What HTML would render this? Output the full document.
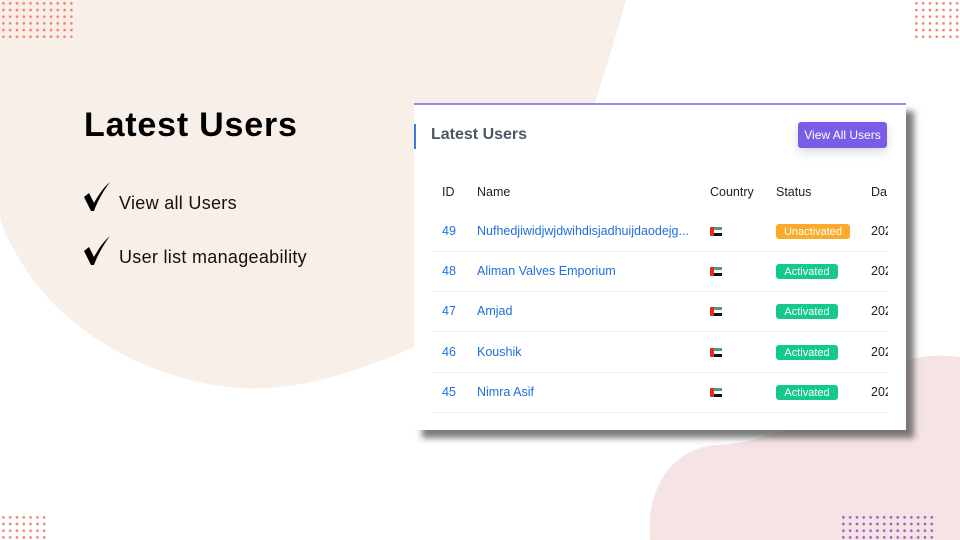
<!DOCTYPE html>
<html><head><meta charset="utf-8"><style>
*{margin:0;padding:0;box-sizing:border-box}
body{width:960px;height:540px;overflow:hidden;background:#fff;position:relative;font-family:"Liberation Sans",sans-serif}
.abs{position:absolute}
.dots{position:absolute;background-image:radial-gradient(circle,#f7806e 1.1px,transparent 1.6px);background-size:6.8px 6.7px}
.pdots{position:absolute;background-image:radial-gradient(circle,#9a5fcf 1.1px,transparent 1.6px);background-size:6.8px 6.7px}
.card{position:absolute;left:414px;top:103px;width:492px;height:327px;background:#fff;border-top:2px solid #8f8cf0;box-shadow:8px 8px 6px rgba(80,80,80,.75)}
.t{position:absolute;font-size:12.5px;color:#1e6fe0}
.row{position:absolute;left:18px;width:456px;height:1px;background:#eceff2}
.flag{position:absolute;width:12px;height:9px;left:296px}
.badge{position:absolute;left:362px;height:15px;border-radius:3px;color:#fff;font-size:11px;line-height:16px;text-align:center}
.dt{position:absolute;left:457px;font-size:12.5px;color:#222;width:17px;overflow:hidden;white-space:nowrap}
</style></head><body>
<svg class="abs" style="left:0;top:0" width="960" height="540">
<path d="M0 0 L626 0 C610 60 590 110 578 170 C560 250 500 320 420 345 C360 370 300 392 240 388 C150 382 60 330 20 260 C8 240 0 225 0 214 Z" fill="#f9efe9"/>
<path d="M650 540 C645 480 680 445 720 445 C780 440 800 420 830 400 C870 370 910 350 960 357 L960 540 Z" fill="#f6e3e4"/>
<path d="M84 197 L89 193 L94 203 C99 194 104 187 110 182 C104 190 98 200 94 211 L91 211 Z" fill="#000"/>
<path d="M84 251 L89 247 L94 257 C99 248 104 241 110 236 C104 244 98 254 94 265 L91 265 Z" fill="#000"/>
</svg>
<div class="dots" style="left:0;top:0;width:74px;height:38px"></div>
<div class="dots" style="left:913px;top:0;width:47px;height:38px"></div>
<div class="dots" style="left:0;top:514px;width:48px;height:26px"></div>
<div class="pdots" style="left:840px;top:514px;width:96px;height:26px"></div>

<div class="abs" style="left:84px;top:106px;font-size:34px;font-weight:bold;color:#000;letter-spacing:0.8px">Latest Users</div>
<div class="abs" style="left:119px;top:193px;font-size:18px;color:#111;letter-spacing:0.3px">View all Users</div>
<div class="abs" style="left:119px;top:247px;font-size:18px;color:#111;letter-spacing:0.3px">User list manageability</div>

<div class="card">
<div class="abs" style="left:0;top:19px;width:2px;height:25px;background:#3d7be0"></div>
<div class="abs" style="left:17px;top:21px;font-size:16px;font-weight:bold;color:#4a5866">Latest Users</div>
<div class="abs" style="left:384px;top:17px;width:89px;height:26px;background:#7b5ce8;border-radius:3px;color:#fff;font-size:12px;line-height:26px;text-align:center;box-shadow:0 4px 10px rgba(0,0,0,.15)">View All Users</div>
<div class="abs" style="left:28px;top:80px;font-size:12.5px;color:#222">ID</div>
<div class="abs" style="left:63px;top:80px;font-size:12.5px;color:#222">Name</div>
<div class="abs" style="left:296px;top:80px;font-size:12.5px;color:#222">Country</div>
<div class="abs" style="left:362px;top:80px;font-size:12.5px;color:#222">Status</div>
<div class="dt" style="top:80px">Da</div>

<div class="t" style="left:28px;top:119px">49</div><div class="t" style="left:63px;top:119px">Nufhedjiwidjwjdwihdisjadhuijdaodejg...</div>
<div class="t" style="left:28px;top:159px">48</div><div class="t" style="left:63px;top:159px">Aliman Valves Emporium</div>
<div class="t" style="left:28px;top:199px">47</div><div class="t" style="left:63px;top:199px">Amjad</div>
<div class="t" style="left:28px;top:240px">46</div><div class="t" style="left:63px;top:240px">Koushik</div>
<div class="t" style="left:28px;top:280px">45</div><div class="t" style="left:63px;top:280px">Nimra Asif</div>

<svg class="flag" style="top:122px" viewBox="0 0 12 9"><rect width="12" height="3" fill="#4aa36b"/><rect y="3" width="12" height="3" fill="#fff"/><rect y="6" width="12" height="3" fill="#111"/><rect width="4" height="9" fill="#e02b2b"/></svg>
<svg class="flag" style="top:162px" viewBox="0 0 12 9"><rect width="12" height="3" fill="#4aa36b"/><rect y="3" width="12" height="3" fill="#fff"/><rect y="6" width="12" height="3" fill="#111"/><rect width="4" height="9" fill="#e02b2b"/></svg>
<svg class="flag" style="top:202px" viewBox="0 0 12 9"><rect width="12" height="3" fill="#4aa36b"/><rect y="3" width="12" height="3" fill="#fff"/><rect y="6" width="12" height="3" fill="#111"/><rect width="4" height="9" fill="#e02b2b"/></svg>
<svg class="flag" style="top:243px" viewBox="0 0 12 9"><rect width="12" height="3" fill="#4aa36b"/><rect y="3" width="12" height="3" fill="#fff"/><rect y="6" width="12" height="3" fill="#111"/><rect width="4" height="9" fill="#e02b2b"/></svg>
<svg class="flag" style="top:283px" viewBox="0 0 12 9"><rect width="12" height="3" fill="#4aa36b"/><rect y="3" width="12" height="3" fill="#fff"/><rect y="6" width="12" height="3" fill="#111"/><rect width="4" height="9" fill="#e02b2b"/></svg>

<div class="badge" style="top:119px;width:74px;background:#fbab2a">Unactivated</div>
<div class="badge" style="top:159px;width:62px;background:#14c98a">Activated</div>
<div class="badge" style="top:199px;width:62px;background:#14c98a">Activated</div>
<div class="badge" style="top:240px;width:62px;background:#14c98a">Activated</div>
<div class="badge" style="top:280px;width:62px;background:#14c98a">Activated</div>

<div class="dt" style="top:119px">202</div>
<div class="dt" style="top:159px">202</div>
<div class="dt" style="top:199px">202</div>
<div class="dt" style="top:240px">202</div>
<div class="dt" style="top:280px">202</div>

<div class="row" style="top:146px"></div>
<div class="row" style="top:186px"></div>
<div class="row" style="top:226px"></div>
<div class="row" style="top:267px"></div>
<div class="row" style="top:307px"></div>
</div>
</body></html>
